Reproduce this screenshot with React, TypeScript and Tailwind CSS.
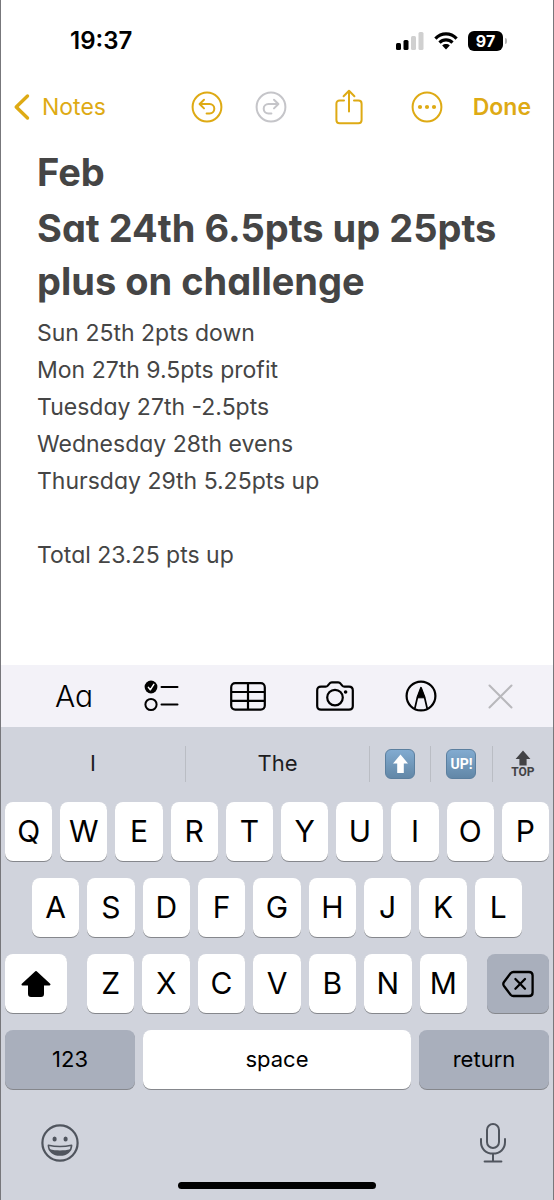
import React, { useState } from "react";
import clsx from "clsx";

const NOTE_LINES = [
  "Sun 25th 2pts down",
  "Mon 27th 9.5pts profit",
  "Tuesday 27th -2.5pts",
  "Wednesday 28th evens",
  "Thursday 29th 5.25pts up",
  "",
  "Total 23.25 pts up",
];

const ROW_ONE = ["Q", "W", "E", "R", "T", "Y", "U", "I", "O", "P"];
const ROW_TWO = ["A", "S", "D", "F", "G", "H", "J", "K", "L"];
const ROW_THREE = ["Z", "X", "C", "V", "B", "N", "M"];

interface KeyProps {
  children: React.ReactNode;
  label?: string;
  dark?: boolean;
  className?: string;
  onClick?: () => void;
}

function Key({ children, label, dark, className, onClick }: KeyProps) {
  return (
    <button
      type="button"
      aria-label={label}
      onClick={onClick}
      className={clsx(
        "flex h-[59px] min-w-0 items-center justify-center rounded-lg text-black shadow-[0_1px_0_#85878c]",
        dark ? "bg-[#a9afbc]" : "bg-white",
        className
      )}
    >
      {children}
    </button>
  );
}

function StatusBar() {
  return (
    <header className="flex h-[82px] items-center justify-between pr-[46px] pl-[69px]">
      <time className="text-2xl font-semibold text-black">19:37</time>
      <div className="flex items-center gap-[10px]">
        {/* Signal */}
        <svg width="28" height="18" viewBox="0 0 28 18" aria-label="Signal">
          <rect x="0" y="11" width="5" height="7" rx="1.5" />
          <rect x="7.5" y="8" width="5" height="10" rx="1.5" />
          <rect x="15" y="4" width="5" height="14" rx="1.5" fill="#d0d0d0" />
          <rect x="22.5" y="0" width="5" height="18" rx="1.5" fill="#d0d0d0" />
        </svg>
        {/* Wifi */}
        <svg width="24" height="18" viewBox="0 0 24 18" aria-label="Wifi">
          <g fill="none" stroke="#000" strokeWidth="3.2">
            <path d="M1.4 6.6C7.4 0.4 16.6 0.4 22.6 6.6" />
            <path d="M5.5 10.6C9.2 6.9 14.8 6.9 18.5 10.6" />
          </g>
          <path d="M8.2 13.4C10.4 11.5 13.6 11.5 15.8 13.4L12 17.4Z" />
        </svg>
        {/* Battery */}
        <div className="flex items-center gap-[2px]">
          <span className="flex h-5 w-[35px] items-center justify-center rounded-md bg-black text-base font-bold text-white">
            97
          </span>
          <span className="h-[6px] w-[2px] rounded-r-full bg-[#b5b5b5]" />
        </div>
      </div>
    </header>
  );
}

function NavBar() {
  return (
    <nav className="flex h-[50px] items-center pr-[22px] pl-3 text-[#deaa14]">
      <a href="#notes" className="flex items-center gap-3 text-[23px]">
        <svg width="17" height="28" viewBox="0 0 17 28" fill="none" stroke="currentColor" strokeWidth="3.4" strokeLinecap="round" strokeLinejoin="round">
          <path d="M14.5 3L3.2 14L14.5 25" />
        </svg>
        Notes
      </a>
      <button type="button" aria-label="Undo" className="ml-auto">
        <svg width="32" height="32" viewBox="0 0 32 32" fill="none" stroke="currentColor" strokeWidth="2" strokeLinecap="round" strokeLinejoin="round">
          <circle cx="16" cy="16" r="14.4" />
          <path d="M13 8.8L8.6 13L13 17.4M9 13H18.6C21.4 13 23.3 15 23.3 17.7C23.3 20.4 21.4 22.4 18.6 22.4H15.6" />
        </svg>
      </button>
      <button type="button" aria-label="Redo" disabled className="ml-8 text-[#c5c5c9]">
        <svg width="32" height="32" viewBox="0 0 32 32" fill="none" stroke="currentColor" strokeWidth="2" strokeLinecap="round" strokeLinejoin="round">
          <circle cx="16" cy="16" r="14.4" />
          <path d="M19 8.8L23.4 13L19 17.4M23 13H13.4C10.6 13 8.7 15 8.7 17.7C8.7 20.4 10.6 22.4 13.4 22.4H16.4" />
        </svg>
      </button>
      <button type="button" aria-label="Share" className="ml-12">
        <svg width="28" height="36" viewBox="0 0 28 36" fill="none" stroke="currentColor" strokeWidth="2" strokeLinecap="round" strokeLinejoin="round">
          <path d="M9 11.5H4.6C2.6 11.5 1.4 12.7 1.4 14.7V31C1.4 33 2.6 34.2 4.6 34.2H23.4C25.4 34.2 26.6 33 26.6 31V14.7C26.6 12.7 25.4 11.5 23.4 11.5H19" />
          <path d="M14 22.5V2M8.6 7.2L14 1.8L19.4 7.2" />
        </svg>
      </button>
      <button type="button" aria-label="More" className="ml-12">
        <svg width="32" height="32" viewBox="0 0 32 32" fill="none">
          <circle cx="16" cy="16" r="14.4" stroke="currentColor" strokeWidth="2" />
          <circle cx="9" cy="16" r="2.1" fill="currentColor" />
          <circle cx="16" cy="16" r="2.1" fill="currentColor" />
          <circle cx="23" cy="16" r="2.1" fill="currentColor" />
        </svg>
      </button>
      <button type="button" className="ml-[30px] text-[23px] font-semibold">
        Done
      </button>
    </nav>
  );
}

function FormatBar() {
  return (
    <div className="flex h-[62px] items-center justify-between bg-[#f3f2f8] pr-10 pl-[54px] text-black">
      <button type="button" className="text-[30px] font-light [font-feature-settings:'cv11']">
        Aa
      </button>
      <button type="button" aria-label="Checklist">
        <svg width="35" height="32" viewBox="0 0 35 32" fill="none" stroke="currentColor" strokeWidth="2" strokeLinecap="round" strokeLinejoin="round">
          <circle cx="7" cy="7" r="6.4" fill="currentColor" stroke="none" />
          <path d="M4.4 7.4L6.3 9.8L9.8 4.4" stroke="#fff" strokeWidth="1.5" />
          <circle cx="7" cy="24.5" r="5.6" />
          <path d="M17.5 7H33.5M17.5 24.5H33.5" />
        </svg>
      </button>
      <button type="button" aria-label="Table">
        <svg width="36" height="29" viewBox="0 0 36 29" fill="none" stroke="currentColor" strokeWidth="2.2">
          <rect x="1.2" y="1.2" width="33.6" height="26.4" rx="4" />
          <path d="M18 1V28M1 10H35M1 18.8H35" />
        </svg>
      </button>
      <button type="button" aria-label="Camera">
        <svg width="38" height="30" viewBox="0 0 38 30" fill="none" stroke="currentColor" strokeWidth="2.2" strokeLinejoin="round">
          <path d="M5 5.6H9.6C10.6 5.6 11.2 5.3 11.8 4.6L13.4 2.6C14 1.8 14.7 1.4 15.8 1.4H22.2C23.3 1.4 24 1.8 24.6 2.6L26.2 4.6C26.8 5.3 27.4 5.6 28.4 5.6H33C35.4 5.6 36.8 7 36.8 9.2V25C36.8 27.2 35.4 28.6 33 28.6H5C2.6 28.6 1.2 27.2 1.2 25V9.2C1.2 7 2.6 5.6 5 5.6Z" />
          <circle cx="19" cy="16.6" r="7.8" />
          <circle cx="29.6" cy="11" r="1.8" fill="currentColor" stroke="none" />
        </svg>
      </button>
      <button type="button" aria-label="Markup">
        <svg width="32" height="32" viewBox="0 0 32 32" fill="none" stroke="currentColor" strokeWidth="2.2" strokeLinejoin="round">
          <circle cx="16" cy="16" r="14.4" />
          <path d="M9.8 28.6L12.4 17.4L16 7.8L19.6 17.4L22.2 28.6" strokeWidth="1.8" />
          <path d="M12.3 17.8L16 7.8L19.7 17.8Z" fill="currentColor" strokeWidth="1" />
        </svg>
      </button>
      <button type="button" aria-label="Close" className="text-[#b8b8bc]">
        <svg width="25" height="25" viewBox="0 0 25 25" stroke="currentColor" strokeWidth="2" strokeLinecap="round">
          <path d="M1.5 1.5L23.5 23.5M23.5 1.5L1.5 23.5" />
        </svg>
      </button>
    </div>
  );
}

function Suggestions() {
  return (
    <div className="grid h-[73px] grid-cols-9 items-center text-[22px] text-[#1c1c1e]">
      <button type="button" className="col-span-3 h-9">
        I
      </button>
      <button type="button" className="col-span-3 h-9 border-l border-[#babdc4]">
        The
      </button>
      <button type="button" aria-label="Up arrow" className="flex h-9 items-center justify-center border-l border-[#babdc4]">
        <span className="flex size-[30px] items-center justify-center rounded-md border border-[#5b7f9f] bg-linear-to-b from-[#82abd0] to-[#6287a7]">
          <svg width="17" height="20" viewBox="0 0 17 20" fill="#fff">
            <path d="M8.5 0.5L16 9.4H11.8V19H5.2V9.4H1Z" />
          </svg>
        </span>
      </button>
      <button type="button" className="flex h-9 items-center justify-center border-l border-[#babdc4]">
        <span className="flex size-[30px] items-center justify-center rounded-md border border-[#5b7f9f] bg-linear-to-b from-[#82abd0] to-[#6287a7] font-[Roboto,sans-serif] text-sm font-bold text-white">
          UP!
        </span>
      </button>
      <button type="button" className="flex h-9 flex-col items-center justify-center border-l border-[#babdc4] text-[#424245]">
        <svg width="16" height="16" viewBox="0 0 16 16" fill="currentColor">
          <path d="M8 0.5L15.4 9H11.6V15.5H4.4V9H0.6Z" />
        </svg>
        <span className="font-[Roboto,sans-serif] text-xs leading-3 font-bold">TOP</span>
      </button>
    </div>
  );
}

function Keyboard() {
  const [shift, setShift] = useState(true);
  const letter = (char: string) => (
    <Key key={char} className="flex-1 text-[30px]">
      {shift ? char : char.toLowerCase()}
    </Key>
  );

  return (
    <section aria-label="Keyboard" className="bg-[#d0d3dc]">
      <Suggestions />
      <div className="flex flex-col gap-[17px] pt-[2px] pr-1 pl-1">
        <div className="flex gap-2">{ROW_ONE.map(letter)}</div>
        <div className="flex gap-2 px-[27px]">{ROW_TWO.map(letter)}</div>
        <div className="flex gap-5">
          <Key label="Shift" className="w-[62px]" onClick={() => setShift(!shift)}>
            <svg width="32" height="28" viewBox="0 0 32 28" fill="currentColor" stroke="currentColor" strokeWidth="2" strokeLinejoin="round">
              <path d="M16 2L29.5 14.4H23V24C23 25.4 22.4 26 21 26H11C9.6 26 9 25.4 9 24V14.4H2.5Z" />
            </svg>
          </Key>
          <div className="flex flex-1 gap-2">{ROW_THREE.map(letter)}</div>
          <Key label="Delete" dark className="w-[62px]">
            <svg width="32" height="28" viewBox="0 0 32 28" fill="none" stroke="currentColor" strokeWidth="2.3" strokeLinecap="round" strokeLinejoin="round">
              <path d="M11.4 2H27C29.4 2 30.6 3.2 30.6 5.6V22.4C30.6 24.8 29.4 26 27 26H11.4C10.2 26 9.4 25.6 8.6 24.8L2 16C1 14.6 1 13.4 2 12L8.6 3.2C9.4 2.4 10.2 2 11.4 2Z" />
              <path d="M13.4 9L23 18.8M23 9L13.4 18.8" />
            </svg>
          </Key>
        </div>
        <div className="flex gap-2 text-[22px]">
          <Key dark className="w-[130px]">123</Key>
          <Key className="flex-1">space</Key>
          <Key dark className="w-[130px]">return</Key>
        </div>
      </div>
      <div className="flex h-[93px] items-center justify-between px-10 pt-[15px] text-[#50555e]">
        <button type="button" aria-label="Emoji">
          <svg width="38" height="38" viewBox="0 0 38 38" fill="none" stroke="currentColor" strokeWidth="2.2" strokeLinejoin="round">
            <circle cx="19" cy="19" r="17.6" />
            <ellipse cx="13.6" cy="15" rx="2.1" ry="2.6" fill="currentColor" stroke="none" />
            <ellipse cx="24.6" cy="15" rx="2.1" ry="2.6" fill="currentColor" stroke="none" />
            <path d="M7.4 21.2C14.6 22.8 23.4 22.8 30.6 21.2C30.6 27 25.6 31 19 31C12.4 31 7.4 27 7.4 21.2Z" strokeWidth="1.6" />
            <path d="M8.6 25.2C15 26.8 23 26.8 29.4 25.2C27.8 29 23.8 31 19 31C14.2 31 10.2 29 8.6 25.2Z" fill="currentColor" stroke="none" />
          </svg>
        </button>
        <button type="button" aria-label="Dictate">
          <svg width="40" height="40" viewBox="0 0 40 40" fill="none" stroke="currentColor" strokeWidth="2" strokeLinecap="round">
            <rect x="14" y="1" width="12" height="24" rx="6" />
            <path d="M8 16V19C8 26 13 30.6 20 30.6C27 30.6 32 26 32 19V16M20 31V38.4M11.6 38.4H28.4" />
          </svg>
        </button>
      </div>
      <div className="flex h-[18px] justify-center">
        <span className="h-[7px] w-[198px] rounded-full bg-black" />
      </div>
    </section>
  );
}

export default function App() {
  return (
    <div className="flex min-h-screen flex-col border-x border-[#77777b] bg-white font-[Inter,sans-serif]">
      <StatusBar />
      <NavBar />
      <main className="flex-1 px-9 pt-[14px] text-[#454545] [font-feature-settings:'cv11']">
        <h1 className="text-[38px] leading-[53px] font-bold">Feb</h1>
        <h2 className="mt-[3px] text-[38px] leading-[53px] font-bold">
          Sat 24th 6.5pts up 25pts plus on challenge
        </h2>
        <div className="mt-[7px] text-[23px] leading-[37px]">
          {NOTE_LINES.map((line, index) => (
            <p key={index} className="min-h-[37px]">
              {line}
            </p>
          ))}
        </div>
      </main>
      <FormatBar />
      <Keyboard />
    </div>
  );
}
